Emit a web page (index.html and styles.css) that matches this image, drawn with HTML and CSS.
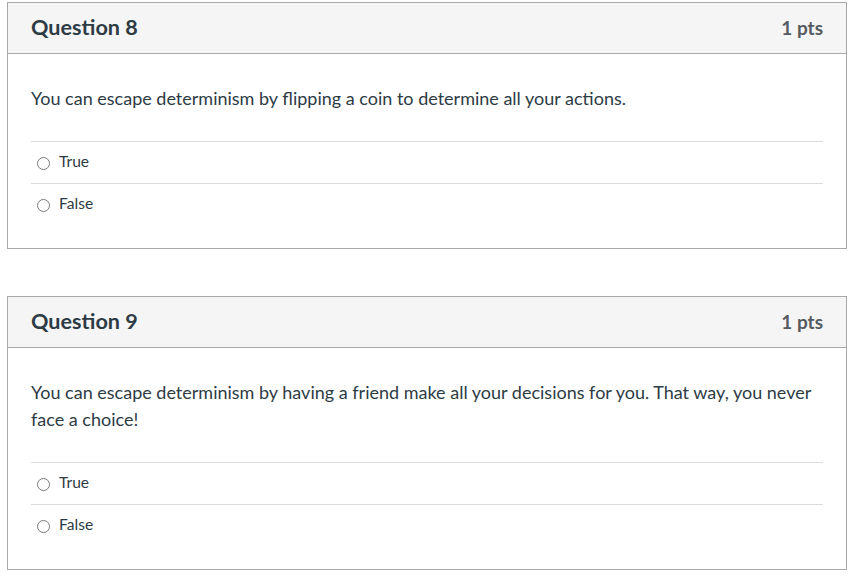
FILE: index.html
```html
<!DOCTYPE html>
<html lang="en">
<head>
<meta charset="utf-8">
<title>Quiz</title>
<link rel="stylesheet" href="styles.css">
</head>
<body>
<div class="quiz">
  <div class="question">
    <div class="q-header">
      <span class="q-title">Question 8</span>
      <span class="q-pts">1 pts</span>
    </div>
    <div class="q-body">
      <div class="q-text">You can escape determinism by flipping a coin to determine all your actions.</div>
      <div class="answers">
        <label class="answer"><span class="radio"></span><span class="a-text">True</span></label>
        <label class="answer"><span class="radio"></span><span class="a-text">False</span></label>
      </div>
    </div>
  </div>
  <div class="question">
    <div class="q-header">
      <span class="q-title">Question 9</span>
      <span class="q-pts">1 pts</span>
    </div>
    <div class="q-body">
      <div class="q-text">You can escape determinism by having a friend make all your decisions for you. That way, you never face a choice!</div>
      <div class="answers">
        <label class="answer"><span class="radio"></span><span class="a-text">True</span></label>
        <label class="answer"><span class="radio"></span><span class="a-text">False</span></label>
      </div>
    </div>
  </div>
</div>
</body>
</html>
```
FILE: styles.css
```css
html, body {
  margin: 0;
  padding: 0;
  background: #ffffff;
}
body {
  font-family: Lato, "Open Sans", "Liberation Sans", sans-serif;
  color: #2d3b45;
}
.quiz {
  padding: 2px 6px 0 7px;
  display: flex;
  flex-direction: column;
  gap: 47px;
}
.question {
  border: 1px solid #a8a8a8;
  background: #fff;
}
.q-header {
  box-sizing: border-box;
  height: 51px;
  background: #f5f5f5;
  border-bottom: 1px solid #a8a8a8;
  display: flex;
  align-items: center;
  justify-content: space-between;
  padding: 0 23px 2px;
}
.q-title {
  font-size: 21.6px;
  font-weight: 700;
  color: #2d3b45;
}
.q-pts {
  font-size: 19px;
  font-weight: 700;
  color: #555b60;
}
.q-body {
  padding: 31px 23px 23px;
}
.q-text {
  font-size: 18px;
  line-height: 27px;
  margin-bottom: 29px;
}
.answer {
  display: flex;
  align-items: center;
  height: 41px;
  border-top: 1px solid #dcdcdc;
  padding-left: 6px;
  color: #2d3b45;
}
.radio {
  width: 13px;
  height: 13px;
  border: 1px solid #7a7a7a;
  border-radius: 50%;
  box-sizing: border-box;
  margin-right: 9px;
  background: #fff;
  position: relative;
  top: 1px;
}
.a-text {
  font-size: 15.6px;
  position: relative;
  top: -2px;
}
```
